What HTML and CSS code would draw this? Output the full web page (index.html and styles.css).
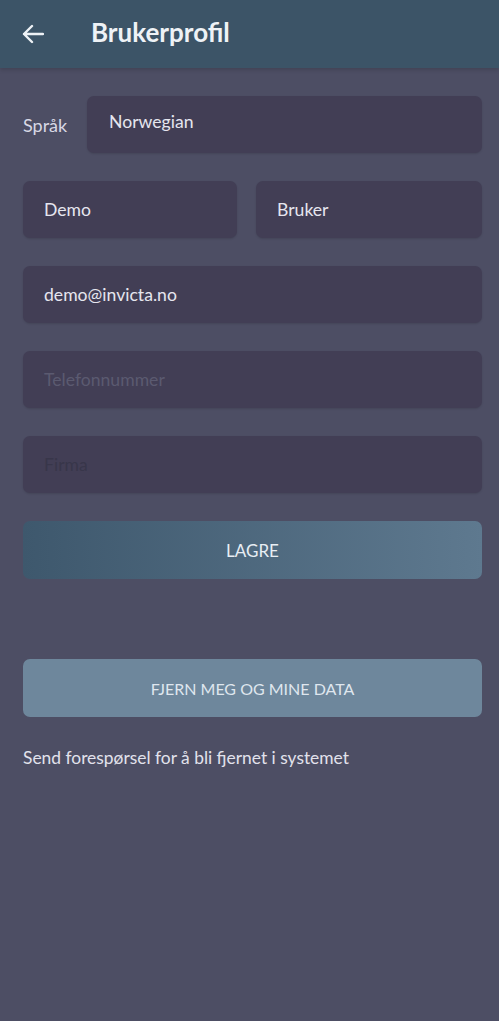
FILE: index.html
```html
<!DOCTYPE html>
<html>
  <head>
    <title>Brukerprofil</title>
    <link rel="stylesheet" href="styles.css">
  </head>
  <body>
    <div class="toolbar">
      <button class="back" aria-label="Tilbake">
        <svg width="22" height="20" viewBox="0 0 22 20">
          <path d="M21 10H2M10 2L2 10l8 8" fill="none" stroke="#eef2f6" stroke-width="2.4" stroke-linecap="round" stroke-linejoin="round"/>
        </svg>
      </button>
      <h1>Brukerprofil</h1>
    </div>

    <div class="profile">
      <div class="row">
        <label for="language">Språk</label>
        <div class="field select" id="language">Norwegian</div>
      </div>

      <div class="row split">
        <div class="field first">Demo</div>
        <div class="field">Bruker</div>
      </div>

      <div class="row">
        <div class="field">demo@invicta.no</div>
      </div>

      <div class="row">
        <div class="field placeholder">Telefonnummer</div>
      </div>

      <div class="row">
        <div class="field placeholder dark">Firma</div>
      </div>

      <button class="save">LAGRE</button>

      <button class="remove">FJERN MEG OG MINE DATA</button>

      <p class="note">Send forespørsel for å bli fjernet i systemet</p>
    </div>
  </body>
</html>
```

FILE: styles.css
```css
body {
  margin: 0;
  background-color: #4d4e64;
  font-family: Lato, "Open Sans", sans-serif;
  color: #e4e4ee;
}

.toolbar {
  display: flex;
  align-items: center;
  height: 68px;
  background-color: #3c5467;
  box-shadow: 0 2px 4px rgba(0, 0, 0, 0.15);
}

.back {
  display: flex;
  align-items: center;
  background: none;
  border: none;
  padding: 0 0 0 22px;
  margin-right: 47px;
  cursor: pointer;
}

.toolbar h1 {
  margin: 0;
  font-size: 26px;
  font-weight: 700;
  color: #eef2f6;
  padding-bottom: 4px;
}

.profile {
  padding: 28px 17px 0 23px;
  display: flex;
  flex-direction: column;
}

.row {
  display: flex;
  align-items: center;
  margin-bottom: 28px;
}

.row label {
  width: 64px;
  font-size: 18px;
  color: #d8d8e4;
}

.field {
  flex: 1;
  height: 57px;
  box-sizing: border-box;
  padding: 0 21px 0;
  display: flex;
  align-items: center;
  background-color: #423e55;
  border-radius: 7px;
  font-size: 17.6px;
  color: #e6e6ef;
  box-shadow: 0 1px 2px rgba(0, 0, 0, 0.12);
}

.field.select {
  padding: 0 22px 7px;
}

.split .first {
  flex: 0 0 214px;
  margin-right: 19px;
}

.placeholder {
  color: #5b5a70;
}

.placeholder.dark {
  color: #38364a;
}

.save,
.remove {
  height: 58px;
  border: none;
  border-radius: 7px;
  font-family: inherit;
  font-size: 16px;
  cursor: pointer;
}

.save {
  margin-top: 0;
  background: linear-gradient(to right, #3e586d, #5e798f);
  color: #e8eef4;
  font-size: 17px;
}

.remove {
  margin-top: 80px;
  background-color: #6e879c;
  color: #dfe6ee;
}

.note {
  margin: 30px 0 0;
  font-size: 17.4px;
  color: #e2e2ec;
}
```
